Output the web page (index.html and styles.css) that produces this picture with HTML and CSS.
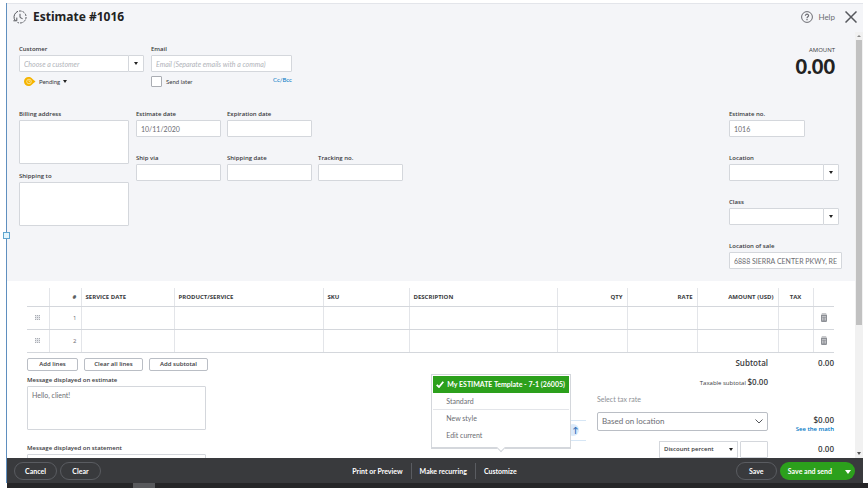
FILE: index.html
```html
<!DOCTYPE html>
<html lang="en">
<head>
    <meta charset="UTF-8">
    <meta name="viewport" content="width=device-width, initial-scale=1.0">
    <title>Estimate #1016</title>
    <link rel="stylesheet" href="styles.css">
</head>
<body>
    <div class="window">
        <span class="handle"></span>
        <header class="titlebar">
            <svg class="history-icon" viewBox="0 0 14 14" fill="none" stroke="#55575c">
                <path d="M2.2 10.6A6 6 0 0 1 3 2.6"/>
                <path d="M3 2.6A6 6 0 1 1 4.5 12.4" stroke-dasharray="2.4 1"/>
                <path d="M0.4 10.8h3.4V7.6M7 3.8v3.7l2.6 1.2"/>
            </svg>
            <h1>Estimate #1016</h1>
            <button type="button" class="help">
                <svg viewBox="0 0 12 12" fill="none" stroke="#6b6c72">
                    <circle cx="6" cy="6" r="5.4"/>
                    <path d="M4.4 4.8C4.4 2.6 7.7 2.8 7.6 4.7 7.5 5.8 6 5.8 6 7.2M6 8.1v1.1" stroke-width="1.2"/>
                </svg>
                Help
            </button>
            <button type="button" class="close" aria-label="Close">
                <svg viewBox="0 0 12 12" stroke="#55575c" stroke-width="1.5"><path d="M0.5 0.5l11 11M11.5 0.5l-11 11"/></svg>
            </button>
        </header>

        <div class="scroller">
            <main class="content">
                <section class="details">
                    <div class="row contact">
                        <div class="field customer">
                            <label for="customer">Customer</label>
                            <div class="combo">
                                <input type="text" id="customer" placeholder="Choose a customer">
                                <button type="button" aria-label="Open customers"><span class="caret"></span></button>
                            </div>
                            <button type="button" class="status">
                                <svg viewBox="0 0 12 9"><path d="M4.5 0C7.5 0 8 1.8 11.5 4.5 8 7.2 7.5 9 4.5 9a4.5 4.5 0 0 1 0-9z" fill="#f5b400"/><circle cx="5" cy="4.5" r="2.3" fill="none" stroke="#fff2c4" stroke-width=".7"/><path d="M5 3v1.6h1.3" fill="none" stroke="#fff2c4" stroke-width=".6"/></svg>
                                Pending <span class="caret"></span>
                            </button>
                        </div>
                        <div class="field email">
                            <label for="email">Email</label>
                            <input type="email" id="email" placeholder="Email (Separate emails with a comma)">
                            <div class="email-options">
                                <input type="checkbox" id="send-later">
                                <label for="send-later">Send later</label>
                                <a href="#">Cc/Bcc</a>
                            </div>
                        </div>
                        <div class="amount">
                            <span>AMOUNT</span>
                            <strong>0.00</strong>
                        </div>
                    </div>

                    <div class="row">
                        <div class="addresses">
                            <div class="field">
                                <label for="billing">Billing address</label>
                                <textarea id="billing"></textarea>
                            </div>
                            <div class="field">
                                <label for="shipping">Shipping to</label>
                                <textarea id="shipping"></textarea>
                            </div>
                        </div>
                        <div class="dates">
                            <div class="field">
                                <label for="estimate-date">Estimate date</label>
                                <input type="text" id="estimate-date" value="10/11/2020">
                            </div>
                            <div class="field">
                                <label for="expiration-date">Expiration date</label>
                                <input type="text" id="expiration-date">
                            </div>
                            <div class="field new-row">
                                <label for="ship-via">Ship via</label>
                                <input type="text" id="ship-via">
                            </div>
                            <div class="field">
                                <label for="shipping-date">Shipping date</label>
                                <input type="text" id="shipping-date">
                            </div>
                            <div class="field">
                                <label for="tracking">Tracking no.</label>
                                <input type="text" id="tracking">
                            </div>
                        </div>
                        <div class="sale-info">
                            <div class="field number">
                                <label for="estimate-no">Estimate no.</label>
                                <input type="text" id="estimate-no" value="1016">
                            </div>
                            <div class="field">
                                <label for="location">Location</label>
                                <div class="combo">
                                    <input type="text" id="location">
                                    <button type="button" aria-label="Open locations"><span class="caret"></span></button>
                                </div>
                            </div>
                            <div class="field">
                                <label for="class">Class</label>
                                <div class="combo">
                                    <input type="text" id="class">
                                    <button type="button" aria-label="Open classes"><span class="caret"></span></button>
                                </div>
                            </div>
                            <div class="field">
                                <label for="sale-location">Location of sale</label>
                                <input type="text" id="sale-location" value="6888 SIERRA CENTER PKWY, RENO">
                            </div>
                        </div>
                    </div>
                </section>

                <section class="lines">
                    <table>
                        <colgroup>
                            <col class="c-grip"><col class="c-num"><col class="c-date"><col class="c-product"><col class="c-sku"><col><col class="c-qty"><col class="c-qty"><col class="c-amount"><col class="c-tax"><col class="c-trash">
                        </colgroup>
                        <thead>
                            <tr>
                                <th></th>
                                <th class="right">#</th>
                                <th>SERVICE DATE</th>
                                <th>PRODUCT/SERVICE</th>
                                <th>SKU</th>
                                <th>DESCRIPTION</th>
                                <th class="right">QTY</th>
                                <th class="right">RATE</th>
                                <th class="right">AMOUNT (USD)</th>
                                <th class="center">TAX</th>
                                <th></th>
                            </tr>
                        </thead>
                        <tbody>
                            <tr>
                                <td class="center"><span class="grip"></span></td>
                                <td class="right">1</td>
                                <td></td><td></td><td></td><td></td><td></td><td></td><td></td><td></td>
                                <td class="center"><svg class="trash" viewBox="0 0 6 9"><path d="M0 2h6v5.5Q6 9 5 9H1Q0 9 0 7.5zM1 .5h4l1 1H0z" fill="#8d9096"/><path d="M1 3.5h4M1.5 4.5v3M3 4.5v3M4.5 4.5v3" stroke="#e0e1e4" stroke-width=".6"/></svg></td>
                            </tr>
                            <tr>
                                <td class="center"><span class="grip"></span></td>
                                <td class="right">2</td>
                                <td></td><td></td><td></td><td></td><td></td><td></td><td></td><td></td>
                                <td class="center"><svg class="trash" viewBox="0 0 6 9"><path d="M0 2h6v5.5Q6 9 5 9H1Q0 9 0 7.5zM1 .5h4l1 1H0z" fill="#8d9096"/><path d="M1 3.5h4M1.5 4.5v3M3 4.5v3M4.5 4.5v3" stroke="#e0e1e4" stroke-width=".6"/></svg></td>
                            </tr>
                        </tbody>
                    </table>

                    <div class="below">
                        <div class="messages">
                            <div class="line-buttons">
                                <button type="button" class="short">Add lines</button>
                                <button type="button">Clear all lines</button>
                                <button type="button">Add subtotal</button>
                            </div>
                            <div class="field">
                                <label for="message">Message displayed on estimate</label>
                                <textarea id="message">Hello, client!</textarea>
                            </div>
                            <div class="field">
                                <label for="statement">Message displayed on statement</label>
                                <textarea id="statement"></textarea>
                            </div>
                        </div>
                        <div class="totals">
                            <strong class="right">Subtotal</strong>
                            <strong class="right">0.00</strong>
                            <div class="taxable right">Taxable subtotal <strong>$0.00</strong></div>
                            <div class="tax-rate">
                                <label for="tax-rate">Select tax rate</label>
                                <div class="select-wrap">
                                    <select id="tax-rate"><option>Based on location</option></select>
                                    <svg viewBox="0 0 8 5" fill="none" stroke="#55575c"><path d="M.5.5L4 4 7.5.5"/></svg>
                                </div>
                            </div>
                            <div class="tax-amount right">
                                <strong>$0.00</strong>
                                <a href="#">See the math</a>
                            </div>
                            <div class="discount">
                                <div class="select-wrap">
                                    <select id="discount-type" aria-label="Discount type"><option>Discount percent</option></select>
                                    <span class="caret"></span>
                                </div>
                                <input type="text" aria-label="Discount">
                            </div>
                            <strong class="right discount-total">0.00</strong>
                        </div>
                    </div>
                </section>
            </main>
            <div class="scrollbar">
                <span class="arrow up"></span>
                <span class="thumb"></span>
                <span class="arrow down"></span>
            </div>
        </div>

        <footer class="footer">
            <div class="side">
                <button type="button" class="pill">Cancel</button>
                <button type="button" class="pill">Clear</button>
            </div>
            <nav class="actions">
                <a href="#">Print or Preview</a>
                <a href="#">Make recurring</a>
                <div class="customize">
                    <a href="#">Customize</a>
                    <div class="dropzone"><span>↑</span></div>
                    <ul class="menu">
                        <li class="selected">
                            <svg viewBox="0 0 8 7" fill="none" stroke="#fff" stroke-width="1.8"><path d="M.7 3.8L3 6 7.3.8"/></svg>
                            <a href="#">My ESTIMATE Template - 7-1 (26005)</a>
                        </li>
                        <li class="divided"><a href="#">Standard</a></li>
                        <li><a href="#">New style</a></li>
                        <li><a href="#">Edit current</a></li>
                    </ul>
                </div>
            </nav>
            <div class="side end">
                <button type="button" class="pill">Save</button>
                <div class="send">
                    <button type="button">Save and send</button>
                    <button type="button" aria-label="More save options"><span class="caret"></span></button>
                </div>
            </div>
        </footer>
    </div>
    <div class="taskbar"><span></span></div>
</body>
</html>
```
FILE: styles.css
```css
* {
    box-sizing: border-box;
}

body {
    margin: 0;
    height: 100vh;
    padding-top: 3px;
    display: flex;
    flex-direction: column;
    overflow: hidden;
    background: #fff;
    color: #393a3d;
    font-family: "Open Sans", Lato, sans-serif;
    font-size: 6px;
    line-height: 8px;
}

button, input, select, textarea {
    margin: 0;
    padding: 0;
    border: 0;
    background: none;
    color: inherit;
    font: inherit;
}

input, textarea {
    display: block;
    width: 100%;
    padding: 0 4px;
    background: #fff;
    border: 1px solid #d4d7dc;
    border-radius: 1px;
    color: #6b6c72;
    font-family: Lato, sans-serif;
    font-size: 7px;
}

input {
    height: 17px;
}

textarea {
    height: 44px;
    padding-top: 4px;
    resize: none;
    overflow: hidden;
}

input::placeholder {
    color: #b0b3b9;
    font-style: italic;
}

select {
    appearance: none;
    width: 100%;
    background: #fff;
}

a {
    color: #0077c5;
    text-decoration: none;
}

svg {
    display: block;
}

.right {
    text-align: right;
}

.center {
    text-align: center;
}

.caret {
    display: inline-block;
    border: 2px solid transparent;
    border-top: 3px solid #222;
    border-bottom: 0;
}

.window {
    position: relative;
    flex: 1;
    min-height: 0;
    margin: 0 5px 0 6px;
    display: flex;
    flex-direction: column;
    border-left: 1px solid #5f8fbf;
}

.handle {
    position: absolute;
    top: 229px;
    left: -4px;
    width: 7px;
    height: 7px;
    background: #e4f5fc;
    border: 1px solid #5fa5cf;
}

/* title */
.titlebar {
    flex: none;
    height: 29px;
    padding: 0 6px 2px;
    display: flex;
    align-items: center;
    background: #f4f5f8;
    border-top: 1px solid #e3e5ea;
}

.history-icon {
    width: 14px;
    height: 14px;
    margin-right: 6px;
}

h1 {
    margin: 0 auto 0 0;
    font-family: "Noto Sans", sans-serif;
    font-size: 12px;
    line-height: 16px;
    color: #222;
}

.help {
    display: flex;
    align-items: center;
    gap: 5px;
    margin-right: 10px;
    font-family: Lato, sans-serif;
    font-size: 8px;
    color: #6b6c72;
}

.help svg, .close svg {
    width: 12px;
    height: 12px;
}

/* scrolled area */
.scroller {
    flex: 1;
    min-height: 0;
    display: flex;
    background: #f4f5f8;
}

.content {
    flex: 1;
    min-width: 0;
    overflow: hidden;
    background: #fff;
}

.scrollbar {
    width: 8px;
    display: flex;
    flex-direction: column;
    align-items: center;
    background: #f1f1f1;
}

.arrow {
    margin: 3px 0;
    border: 2px solid transparent;
}

.up {
    border-bottom: 2px solid #888;
    border-top: 0;
}

.down {
    margin-top: auto;
    border-top: 3px solid #555;
    border-bottom: 0;
}

.thumb {
    width: 6px;
    height: 67%;
    background: #c1c1c1;
}

.details {
    padding: 13px 13px 12px 12px;
    background: #f4f5f8;
}

.row {
    display: flex;
}

.contact {
    gap: 7px;
    height: 65px;
}

.field {
    display: flex;
    flex-direction: column;
    gap: 2px;
}

.field > label {
    font-weight: 600;
}

.customer {
    width: 125px;
}

.email {
    width: 141px;
}

.combo {
    display: flex;
}

.combo input {
    flex: 1;
    min-width: 0;
}

.combo button {
    width: 16px;
    margin-left: -1px;
    display: flex;
    align-items: center;
    justify-content: center;
    background: #fff;
    border: 1px solid #d4d7dc;
    border-radius: 1px;
}

.status {
    display: flex;
    align-items: center;
    gap: 3px;
    margin: 3px 0 0 5px;
    font-family: Lato, sans-serif;
}

.status svg {
    width: 12px;
    height: 9px;
}

.email-options {
    display: flex;
    align-items: center;
    gap: 4px;
    margin-top: 2px;
    font-family: Lato, sans-serif;
}

.email-options input {
    appearance: none;
    width: 11px;
    height: 11px;
    padding: 0;
    border-color: #aaadb3;
}

.email-options a {
    align-self: flex-start;
    margin-left: auto;
}

.amount {
    margin: 1px 7px 0 auto;
    display: flex;
    flex-direction: column;
    text-align: right;
}

.amount strong {
    font-family: Lato, sans-serif;
    font-size: 20px;
    font-weight: 900;
    line-height: 24px;
    color: #222;
}

.addresses {
    width: 110px;
    margin-right: 7px;
    display: flex;
    flex-direction: column;
    gap: 8px;
}

.dates {
    display: grid;
    grid-template-columns: repeat(3, 85px);
    column-gap: 6px;
    row-gap: 17px;
    align-content: start;
}

.new-row {
    grid-column: 1;
}

.sale-info {
    width: 113px;
    margin-left: auto;
    display: flex;
    flex-direction: column;
    gap: 17px;
}

.sale-info .combo {
    margin-right: 3px;
}

.number {
    width: 76px;
}

/* line items */
.lines {
    padding: 7px 21px 0 20px;
}

table {
    width: 100%;
    table-layout: fixed;
    border-collapse: collapse;
    border-bottom: 1px solid #babec5;
}

th, td {
    height: 23px;
    padding: 0 4px;
    border-left: 1px solid #e3e5e9;
    border-bottom: 1px solid #d4d7dc;
    color: #6b6c72;
}

th {
    height: 18px;
    text-align: left;
    color: #393a3d;
}

th.right {
    text-align: right;
}

th.center {
    text-align: center;
}

th:first-child, td:first-child {
    border-left: 0;
}

td.center {
    padding: 0;
}

.c-grip { width: 22px; }
.c-num { width: 32px; }
.c-date { width: 93px; }
.c-product { width: 149px; }
.c-sku { width: 86px; }
.c-qty { width: 70px; }
.c-amount { width: 81px; }
.c-tax { width: 35px; }
.c-trash { width: 21px; }

.grip {
    display: block;
    width: 5px;
    height: 5px;
    margin: 0 auto;
    background: conic-gradient(#e3e5e9 270deg, #aaadb3 0) 0 0 / 2px 2px;
}

.trash {
    width: 6px;
    height: 9px;
    margin: 0 auto;
}

.below {
    display: flex;
    justify-content: space-between;
    padding-top: 5px;
}

.messages {
    display: flex;
    flex-direction: column;
    gap: 5px;
    width: 179px;
}

.messages .field + .field {
    margin-top: 9px;
}

.line-buttons {
    display: flex;
    gap: 6px;
}

.line-buttons button {
    flex: none;
    width: 59px;
    height: 13px;
    border: 1px solid #babec5;
    border-radius: 2px;
    font-weight: 600;
}

.line-buttons .short {
    width: 51px;
}

.totals {
    display: grid;
    grid-template-columns: 171px 66px;
    align-content: start;
}

.totals strong {
    font-size: 8px;
    font-weight: 600;
    line-height: 10px;
}

.taxable {
    grid-column: 1;
    margin-top: 9px;
}

.tax-rate {
    grid-column: 1;
    margin-top: 8px;
    font-family: Lato, sans-serif;
    font-size: 7px;
    color: #8d9096;
}

.select-wrap {
    position: relative;
    display: flex;
}

.select-wrap svg, .select-wrap .caret {
    position: absolute;
    right: 5px;
    top: 7px;
    width: 8px;
}

.select-wrap .caret {
    width: 4px;
}

.tax-rate .select-wrap {
    margin-top: 9px;
}

.tax-rate select {
    height: 19px;
    padding: 0 4px;
    border: 1px solid #babec5;
    border-radius: 2px;
    color: #6b6c72;
    font-size: 8px;
}

.tax-amount {
    display: flex;
    flex-direction: column;
    align-self: end;
    margin-bottom: -2px;
}

.tax-amount a {
    font-weight: 600;
}

.discount {
    display: flex;
    gap: 2px;
    margin: 10px 0 0 62px;
}

.discount .select-wrap {
    width: 79px;
}

.discount select {
    height: 17px;
    padding: 0 4px;
    border: 1px solid #d4d7dc;
    font-weight: 600;
}

.discount input {
    flex: 1;
    min-width: 0;
}

.discount-total {
    margin-top: 13px;
}

/* bottom bar */
.footer {
    flex: none;
    height: 25px;
    padding: 0 8px 0 7px;
    display: grid;
    grid-template-columns: 1fr auto 1fr;
    align-items: center;
    background: #393a3d;
    color: #fff;
    font-family: Lato, sans-serif;
    font-size: 7px;
    font-weight: bold;
}

.side {
    display: flex;
    gap: 3px;
}

.end {
    justify-content: flex-end;
}

.pill {
    min-width: 41px;
    height: 18px;
    padding: 0 10px;
    border: 1px solid #5a5c61;
    border-radius: 9px;
}

.send {
    display: flex;
    height: 18px;
    padding: 0 4px 0 8px;
    gap: 13px;
    background: #2ca01c;
    border-radius: 9px;
}

.send .caret {
    border-width: 4px 3px 0;
    border-top-color: #fff;
}

.actions {
    display: flex;
}

.actions > * {
    padding: 4px 8px;
}

.actions > * + * {
    border-left: 1px solid #5a5c61;
}

.actions a {
    color: #fff;
}

.customize {
    position: relative;
}

.menu {
    position: absolute;
    bottom: 30px;
    left: 50%;
    width: 140px;
    margin: 0 0 0 -69px;
    padding: 1px 1px 3px;
    list-style: none;
    background: #fff;
    border: 1px solid #d4d7dc;
    border-bottom-width: 2px;
    font-weight: normal;
}

.menu::after {
    content: "";
    position: absolute;
    bottom: -4px;
    left: 50%;
    width: 5px;
    height: 5px;
    margin-left: -3px;
    background: #fff;
    border: solid #d4d7dc;
    border-width: 0 1px 1px 0;
    transform: rotate(45deg);
}

.menu li {
    display: flex;
    align-items: center;
    height: 17px;
    padding-left: 13px;
}

.menu li a {
    color: #6b6c72;
}

.menu .selected {
    gap: 3px;
    padding-left: 3px;
    background: #2ca01c;
}

.menu .selected a {
    color: #fff;
    font-weight: bold;
    white-space: nowrap;
}

.selected svg {
    flex: none;
    width: 8px;
    height: 7px;
}

.divided {
    border-bottom: 1px solid #e3e5e9;
}

/* drop target that sits half under the menu */
.dropzone {
    position: absolute;
    bottom: 38px;
    left: 50%;
    width: 15px;
    height: 21px;
    margin-left: 71px;
    border: solid #d6e6f5;
    border-width: 1px 0;
}

.dropzone span {
    display: block;
    width: 12px;
    height: 12px;
    margin: 3px 0 0 -4px;
    padding-left: 5px;
    border-radius: 6px;
    background: #dbeafa;
    color: #2d6cb5;
    font-size: 8px;
    line-height: 12px;
}

.taskbar {
    flex: none;
    height: 5px;
    margin-left: 7px;
    padding-left: 126px;
    background: #262628;
}

.taskbar span {
    display: block;
    width: 22px;
    height: 5px;
    background: #58595c;
}
```
